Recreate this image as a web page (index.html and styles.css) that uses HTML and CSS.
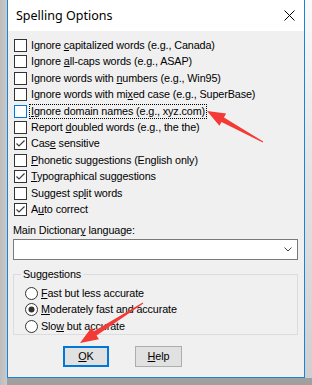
FILE: index.html
```html
<!DOCTYPE html>
<html>
<head>
<meta charset="utf-8">
<title>Spelling Options</title>
<link rel="stylesheet" href="styles.css">
</head>
<body>
<div class="screen">
  <div class="shadow-left"></div>
  <div class="dialog">
    <div class="titlebar">
      <span class="title">Spelling Options</span>
      <svg class="close" width="11" height="11" viewBox="0 0 11 11"><path d="M0.5 0.5 L10.5 10.5 M10.5 0.5 L0.5 10.5" stroke="#000" stroke-width="1" fill="none"/></svg>
    </div>
    <div class="content">
      <div class="checks">
        <div class="row"><svg class="cb" viewBox="0 0 13 13"><rect x="0.5" y="0.5" width="12" height="12"/></svg><span class="lbl">Ignore <u>c</u>apitalized words (e.g., Canada)</span></div>
        <div class="row"><svg class="cb" viewBox="0 0 13 13"><rect x="0.5" y="0.5" width="12" height="12"/></svg><span class="lbl">Ignore <u>a</u>ll-caps words (e.g., ASAP)</span></div>
        <div class="row"><svg class="cb" viewBox="0 0 13 13"><rect x="0.5" y="0.5" width="12" height="12"/></svg><span class="lbl">Ignore words with <u>n</u>umbers (e.g., Win95)</span></div>
        <div class="row"><svg class="cb" viewBox="0 0 13 13"><rect x="0.5" y="0.5" width="12" height="12"/></svg><span class="lbl">Ignore words with mi<u>x</u>ed case (e.g., SuperBase)</span></div>
        <div class="row"><svg class="cb cb-hover" viewBox="0 0 13 13"><rect x="0.5" y="0.5" width="12" height="12"/></svg><span class="lbl lbl-focus"><u>I</u>gnore domain names (e.g., xyz.com)</span></div>
        <div class="row"><svg class="cb" viewBox="0 0 13 13"><rect x="0.5" y="0.5" width="12" height="12"/></svg><span class="lbl">Report <u>d</u>oubled words (e.g., the the)</span></div>
        <div class="row"><svg class="cb" viewBox="0 0 13 13"><rect x="0.5" y="0.5" width="12" height="12"/><polyline class="tick" points="2.5,6.5 5,9 10.5,3.5"/></svg><span class="lbl">Cas<u>e</u> sensitive</span></div>
        <div class="row"><svg class="cb" viewBox="0 0 13 13"><rect x="0.5" y="0.5" width="12" height="12"/></svg><span class="lbl"><u>P</u>honetic suggestions (English only)</span></div>
        <div class="row"><svg class="cb" viewBox="0 0 13 13"><rect x="0.5" y="0.5" width="12" height="12"/><polyline class="tick" points="2.5,6.5 5,9 10.5,3.5"/></svg><span class="lbl"><u>T</u>ypographical suggestions</span></div>
        <div class="row"><svg class="cb" viewBox="0 0 13 13"><rect x="0.5" y="0.5" width="12" height="12"/></svg><span class="lbl">Suggest sp<u>l</u>it words</span></div>
        <div class="row"><svg class="cb" viewBox="0 0 13 13"><rect x="0.5" y="0.5" width="12" height="12"/><polyline class="tick" points="2.5,6.5 5,9 10.5,3.5"/></svg><span class="lbl">A<u>u</u>to correct</span></div>
      </div>
      <div class="dict-label">Main Dictionar<u>y</u> language:</div>
      <div class="select">
        <svg class="chev" width="8" height="5" viewBox="0 0 8 5"><polyline points="0.5,0.5 4,4 7.5,0.5" fill="none" stroke="#444" stroke-width="1"/></svg>
      </div>
      <fieldset class="group">
        <legend>Suggestions</legend>
        <div class="rrow"><svg class="rb" viewBox="0 0 13 13"><circle cx="6.5" cy="6.5" r="6"/></svg><span class="rlbl"><u>F</u>ast but less accurate</span></div>
        <div class="rrow"><svg class="rb" viewBox="0 0 13 13"><circle cx="6.5" cy="6.5" r="6"/><circle class="dot" cx="6.5" cy="6.5" r="3"/></svg><span class="rlbl"><u>M</u>oderately fast and accurate</span></div>
        <div class="rrow"><svg class="rb" viewBox="0 0 13 13"><circle cx="6.5" cy="6.5" r="6"/></svg><span class="rlbl">Slo<u>w</u> but accurate</span></div>
      </fieldset>
      <div class="buttons">
        <div class="btn btn-default"><u>O</u>K</div>
        <div class="btn btn-help"><u>H</u>elp</div>
      </div>
    </div>
  </div>
  <div class="shadow-right"></div>
</div>
<svg class="arrows" width="312" height="385" viewBox="0 0 312 385">
  <polygon points="207,111 226.1,113.6 224,117.5 263.2,141.6 262.8,142.4 221.5,121.9 219.4,125.8"/>
  <polygon points="80,343 98.9,339.2 96.5,335.5 143.3,303.4 142.7,302.6 93.9,331.2 91.5,327.5"/>
</svg>
</body>
</html>
```

FILE: styles.css
```css
html, body {
  margin: 0;
  padding: 0;
}

body {
  width: 312px;
  height: 385px;
  overflow: hidden;
  background: linear-gradient(#b8b8b8, #a0a0a0);
  font-family: "Liberation Sans", Arial, sans-serif;
  font-size: 10.8px;
  color: #000;
  position: relative;
}

.screen {
  display: flex;
  align-items: flex-start;
}

.shadow-left {
  width: 7px;
  height: 385px;
  background: linear-gradient(to right, #bdbdbd, #c9c9c9);
}

.shadow-right {
  width: 7px;
  height: 378px;
  background: linear-gradient(#fafafa, #e6e6e6 40%, #cfcfcf);
}

.dialog {
  box-sizing: border-box;
  width: 298px;
  height: 378px;
  border: 1px solid #1883d7;
  border-top: none;
  background: #f0f0f0;
  display: flex;
  flex-direction: column;
}

.titlebar {
  height: 31px;
  background: #fff;
  display: flex;
  align-items: center;
  justify-content: space-between;
  padding: 0 9px 0 8px;
  flex: none;
}

.title {
  font-family: "Noto Sans", "Open Sans", sans-serif;
  font-size: 12.5px;
  color: #000;
}

.close {
  display: block;
  margin-top: -1px;
}

.content {
  flex: 1;
  padding: 6.3px 6px 0 5px;
}

.checks {
  display: flex;
  flex-direction: column;
}

.row, .rrow {
  height: 16.4px;
  display: flex;
  align-items: center;
  white-space: nowrap;
  letter-spacing: -0.12px;
}

.cb, .rb {
  width: 13px;
  height: 13px;
  flex: none;
  display: block;
}

.cb {
  margin-left: 1px;
}

.cb rect {
  fill: #fff;
  stroke: #333;
  stroke-width: 1;
}

.cb-hover rect {
  stroke: #0078d7;
}

.tick {
  fill: none;
  stroke: #3c3c3c;
  stroke-width: 1.2;
}

.lbl {
  margin-left: 2px;
  padding: 0 1px;
  border: 1px solid transparent;
  line-height: 13px;
}

.lbl-focus {
  border: 1px dotted #000;
}

.dict-label {
  margin-top: 6.9px;
  line-height: 13px;
  letter-spacing: -0.12px;
}

.select {
  box-sizing: border-box;
  margin-top: 1.4px;
  width: 285px;
  height: 21px;
  background: #fff;
  border: 1px solid #7a7a7a;
  display: flex;
  align-items: center;
  justify-content: flex-end;
}

.chev {
  display: block;
  margin-right: 5px;
}

.group {
  box-sizing: border-box;
  width: 285px;
  margin: 8.5px 0 0 0;
  padding: 3.75px 0 0 0;
  border: 1px solid #dcdcdc;
  min-width: 0;
}

.group legend {
  margin-left: 7px;
  padding: 0 2px;
  line-height: 13px;
  letter-spacing: -0.12px;
}

.rrow {
  padding-left: 11px;
}

.rb circle {
  fill: #fff;
  stroke: #333;
  stroke-width: 1;
}

.rb .dot {
  fill: #333;
  stroke: none;
}

.rlbl {
  margin-left: 3px;
  line-height: 13px;
}

.buttons {
  display: flex;
  gap: 26px;
  margin-top: 10.5px;
  padding-left: 50px;
}

.btn {
  box-sizing: border-box;
  height: 21px;
  background: #e1e1e1;
  border: 1px solid #adadad;
  display: flex;
  align-items: center;
  justify-content: center;
  letter-spacing: -0.1px;
}

.btn-default {
  width: 46px;
  border: 2px solid #0078d7;
}

.btn-help {
  width: 47px;
}

.arrows {
  position: absolute;
  left: 0;
  top: 0;
  pointer-events: none;
}

.arrows polygon {
  fill: #f43a36;
}
```
